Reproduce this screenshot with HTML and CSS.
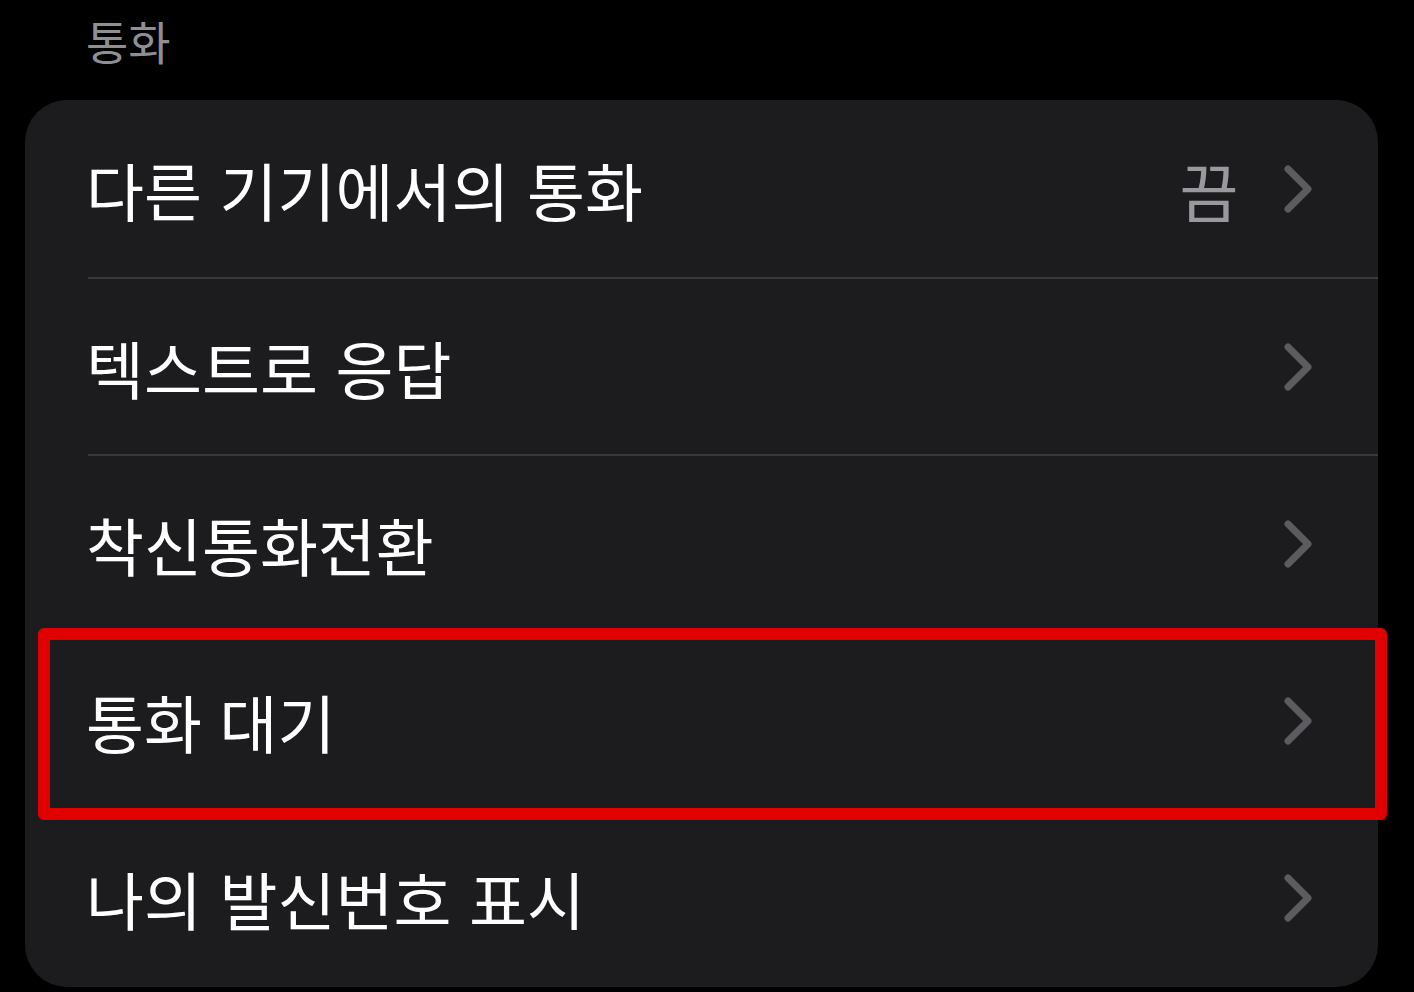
FILE: index.html
```html
<!DOCTYPE html>
<html lang="ko">
<head>
<meta charset="utf-8">
<link rel="stylesheet" href="styles.css">
</head>
<body>
<div class="page">
  <div class="section-title">통화</div>
  <div class="card">
    <div class="row">
      <span class="label">다른 기기에서의 통화</span>
      <span class="value">끔</span>
      <svg class="chev" viewBox="0 0 28 48"><path d="M4 4 L24 24 L4 44"/></svg>
    </div>
    <div class="row">
      <span class="label">텍스트로 응답</span>
      <svg class="chev" viewBox="0 0 28 48"><path d="M4 4 L24 24 L4 44"/></svg>
    </div>
    <div class="row">
      <span class="label">착신통화전환</span>
      <svg class="chev" viewBox="0 0 28 48"><path d="M4 4 L24 24 L4 44"/></svg>
    </div>
    <div class="row">
      <span class="label">통화 대기</span>
      <svg class="chev" viewBox="0 0 28 48"><path d="M4 4 L24 24 L4 44"/></svg>
    </div>
    <div class="row row-last">
      <span class="label">나의 발신번호 표시</span>
      <svg class="chev" viewBox="0 0 28 48"><path d="M4 4 L24 24 L4 44"/></svg>
    </div>
    <div class="highlight"></div>
  </div>
</div>
</body>
</html>
```
FILE: styles.css
```css
html, body {
  margin: 0;
  padding: 0;
  background: #000;
}
body {
  width: 1414px;
  height: 992px;
  overflow: hidden;
  font-family: "Noto Sans CJK KR", "Noto Sans", sans-serif;
}
.page {
  padding: 0 36px 0 25px;
}
.section-title {
  height: 100px;
  box-sizing: border-box;
  padding: 8px 0 0 61px;
  color: #8e8e93;
  font-size: 46px;
  line-height: 64px;
  letter-spacing: 0;
}
.card {
  position: relative;
  background: #1c1c1e;
  border-radius: 42px;
  padding-left: 63px;
}
.row {
  display: flex;
  align-items: center;
  height: 177px;
  box-sizing: border-box;
  padding-right: 64px;
}
.row + .row {
  border-top: 2px solid #38383a;
}
.row-last {
  height: 179px;
  padding-bottom: 2px;
}
.label {
  flex: 1;
  margin-left: -2px;
  color: #fff;
  font-size: 63px;
  letter-spacing: 0;
  line-height: 1;
}
.value {
  color: #98989f;
  font-size: 64px;
  letter-spacing: -0.5px;
  line-height: 1;
  margin-right: 46px;
}
.chev {
  width: 28px;
  height: 48px;
  flex: none;
  margin-right: 2px;
}
.chev path {
  fill: none;
  stroke: #5b5b60;
  stroke-width: 7;
  stroke-linecap: round;
  stroke-linejoin: round;
}
.highlight {
  position: absolute;
  left: 13px;
  top: 528px;
  width: 1349px;
  height: 192px;
  box-sizing: border-box;
  border: 12px solid #e10000;
  border-radius: 6px;
}
```
